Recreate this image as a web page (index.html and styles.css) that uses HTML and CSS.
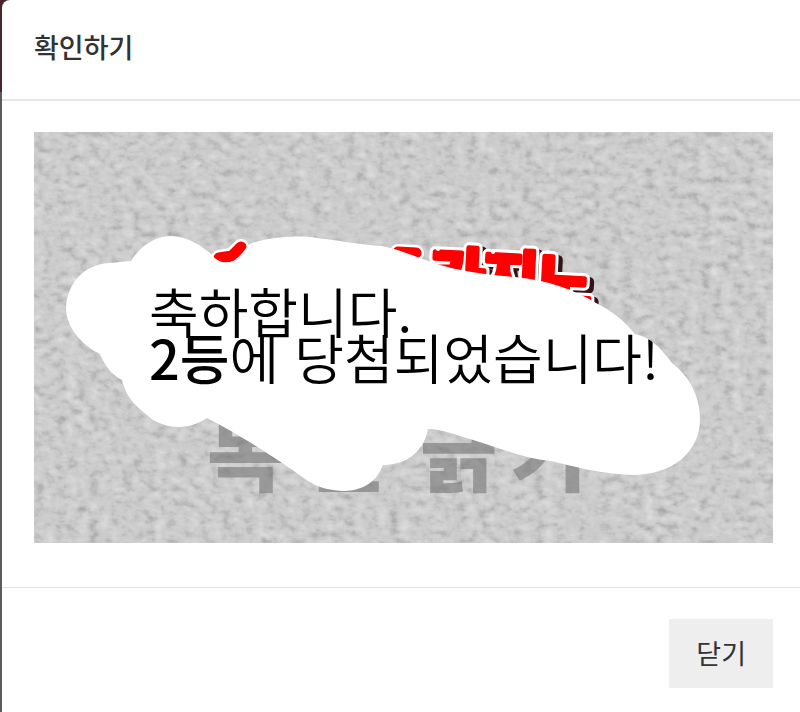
FILE: index.html
```
<!DOCTYPE html>
<html lang="ko">
<head>
<meta charset="utf-8">
<title>확인하기</title>
<link rel="stylesheet" href="styles.css">
</head>
<body>
<section class="dialog" role="dialog" aria-labelledby="dialog-title">
  <header class="dialog-header"><h1 id="dialog-title">확인하기</h1></header>
  <main class="dialog-body">
    <svg class="ticket" viewBox="34 132 739 411">
      <defs>
        <filter id="grain" x="0" y="0" width="1" height="1" color-interpolation-filters="sRGB">
          <feTurbulence type="fractalNoise" baseFrequency="0.09 0.13" numOctaves="4" seed="23"/>
          <feColorMatrix values="0.28 0.22 0 0 0.57  0.28 0.22 0 0 0.57  0.28 0.22 0 0 0.57  0 0 0 0 1"/>
          <feComponentTransfer>
            <feFuncR type="table" tableValues="0 0.2 0.4 0.6 0.79 0.88"/>
            <feFuncG type="table" tableValues="0 0.2 0.4 0.6 0.79 0.88"/>
            <feFuncB type="table" tableValues="0 0.2 0.4 0.6 0.79 0.88"/>
          </feComponentTransfer>
        </filter>
        <path id="scratch" d="M131 261C142 244 156 236 172 236C188 237 201 245 212 255C218 264 231 264 236 259C244 253 246 246 252 243C272 237 296 235 317 238C338 240 360 245 382 246C403 250 420 259 437 264C458 271 490 275 515 277C547 280 575 290 596 303C613 311 625 322 635 334C650 337 660 347 672 363C689 376 700 396 700 419C700 450 675 475 632 475C603 474 575 467 551 461C517 457 492 445 463 437C449 432 437 429 428 429C424 451 407 465 383 465C376 483 362 491 342 491C328 490 317 487 308 481C273 456 240 435 207 418C190 429 171 430 153 420C142 410 127 402 122 380C112 375 105 366 100 354C80 344 67 327 66 309C67 281 86 264 110 263Z"/>
        <clipPath id="revealed"><use href="#scratch"/></clipPath>
      </defs>
      <rect x="34" y="132" width="739" height="411" filter="url(#grain)"/>
      <text class="prompt" y="485"><tspan x="207">복</tspan><tspan x="306">권</tspan><tspan x="420">긁</tspan><tspan x="510">기</tspan></text>
      <g class="brand-mark">
        <path d="M219 258L232 256L241 247M398 252L416 253"/>
        <path class="brand-ink" d="M219 258L232 256L241 247M398 252L416 253"/>
      </g>
      <g transform="rotate(3 432 300)">
        <text class="brand brand-shadow" y="301"><tspan x="432">카</tspan><tspan x="486">지</tspan><tspan x="539">노</tspan></text>
        <text class="brand brand-edge" y="298"><tspan x="427">카</tspan><tspan x="481">지</tspan><tspan x="534">노</tspan></text>
        <text class="brand brand-face" y="298"><tspan x="427">카</tspan><tspan x="481">지</tspan><tspan x="534">노</tspan></text>
      </g>
      <g class="brand-shine"><circle cx="438" cy="249" r="2"/><circle cx="493" cy="252" r="2"/><circle cx="548" cy="252" r="2"/></g>
      <use href="#scratch" class="reveal"/>
      <g class="message" clip-path="url(#revealed)">
        <text x="149" y="334">축하합니다.</text>
        <text x="149" y="380"><tspan class="rank">2등</tspan>에 당첨되었습니다!</text>
      </g>
    </svg>
  </main>
  <footer class="dialog-footer"><button type="button" class="close">닫기</button></footer>
</section>
</body>
</html>
```
FILE: styles.css
```
* { box-sizing: border-box; }
body {
  margin: 0;
  padding-left: 2px;
  min-height: 100vh;
  background: linear-gradient(#4b252c 0 92px, #5b5b5d 92px);
  font-family: "Noto Sans CJK KR", sans-serif;
  color: #333;
}
.dialog {
  min-height: 100vh;
  background: #fff;
  border-top-left-radius: 8px;
}
.dialog-header {
  padding: 27px 32px 32px;
  border-bottom: 2px solid #e5e5e5;
}
h1 {
  margin: 0;
  font-size: 27px;
  line-height: 40px;
  font-weight: 500;
}
.dialog-body { padding: 31px 27px 44px 32px; }
.ticket { display: block; width: 100%; height: auto; }
.dialog-footer {
  display: flex;
  justify-content: flex-end;
  padding: 31px 27px 24px;
  border-top: 1px solid #e0e0e0;
}
.close {
  padding: 14px 27px 15px;
  border: 0;
  background: #eee;
  color: #333;
  font: 400 27px/40px "Noto Sans CJK KR", sans-serif;
}
.prompt { font-size: 84px; font-weight: 900; fill: #777; fill-opacity: 0.62; }
.brand { font-size: 62px; font-weight: 700; stroke-linejoin: round; stroke-linecap: round; }
.brand-shadow { fill: #321317; stroke: #321317; stroke-width: 10px; }
.brand-edge { fill: #fff; stroke: #fff; stroke-width: 11px; }
.brand-face { fill: #f00; stroke: #f00; stroke-width: 5px; }
.brand-mark { fill: none; stroke: #fff; stroke-width: 16px; stroke-linecap: round; stroke-linejoin: round; }
.brand-ink { stroke: #f00; stroke-width: 11px; }
.brand-shine { fill: #fff; }
.reveal { fill: #fff; }
.message { font-size: 54px; font-weight: 350; fill: #000; }
.rank { font-weight: 500; }
```
